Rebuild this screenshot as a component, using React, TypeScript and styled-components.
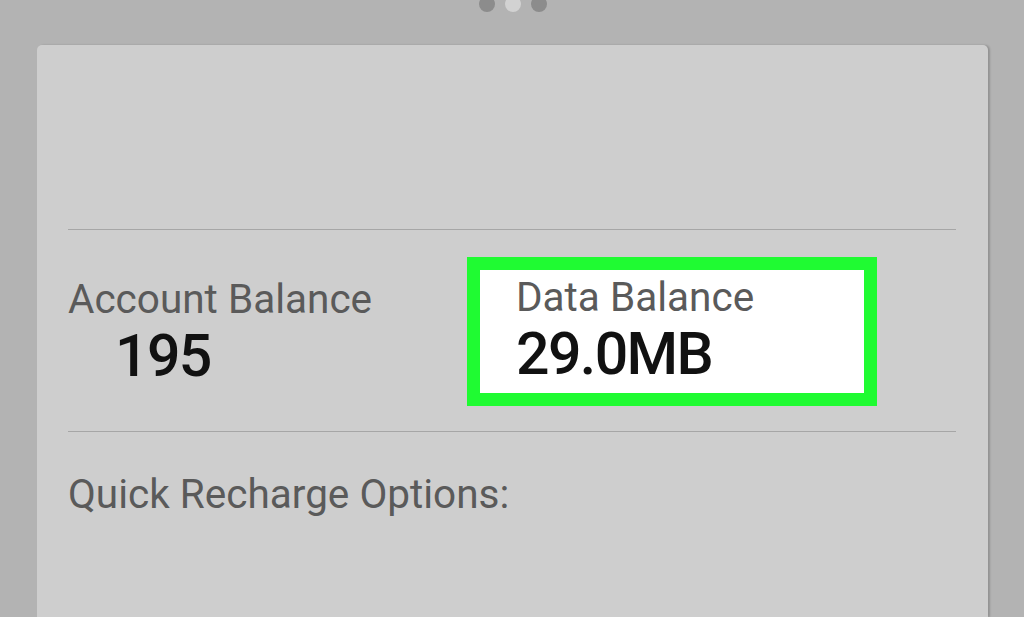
import React from "react";
import styled, { createGlobalStyle } from "styled-components";

const Global = createGlobalStyle`
  html, body {
    margin: 0;
    padding: 0;
    background: #b3b3b3;
    overflow: hidden;
    font-family: Roboto, "Noto Sans", sans-serif;
  }
  #root { height: 617px; }
`;

const Screen = styled.div`
  width: 1024px;
  height: 617px;
  display: flex;
  flex-direction: column;
  overflow: hidden;
`;

const Pager = styled.div`
  display: flex;
  justify-content: center;
  gap: 10px;
  margin-top: -4px;
  padding-left: 1px;
`;

const Dot = styled.span<{ $active?: boolean }>`
  width: 16px;
  height: 16px;
  border-radius: 50%;
  background: ${(p) => (p.$active ? "#d2d2d2" : "#8c8c8c")};
`;

const Card = styled.div`
  margin: 33px 0 0 37px;
  width: 951px;
  flex: 1;
  background: #cecece;
  border-radius: 5px 5px 0 0;
  box-shadow: 2px 0 2px rgba(0, 0, 0, 0.18);
  padding: 184px 32px 0 31px;
  box-sizing: border-box;
`;

const Divider = styled.div`
  height: 1px;
  background: #a6a6a6;
`;

const BalanceRow = styled.div`
  display: flex;
  align-items: flex-start;
  margin: 27px 0 25px;
`;

const AccountColumn = styled.div`
  width: 399px;
  padding-top: 23px;
`;

const Label = styled.div`
  font-size: 40.5px;
  line-height: 39px;
  color: #5a5a5a;
`;

const Value = styled.div<{ $indent?: number }>`
  font-size: 59px;
  line-height: 1;
  font-weight: 500;
  letter-spacing: -1.6px;
  color: #111;
  margin-top: 7px;
  padding-left: ${(p) => p.$indent ?? 0}px;
`;

const Highlight = styled.div`
  width: 410px;
  height: 149px;
  box-sizing: border-box;
  border: 13px solid #1ffb32;
  background: #ffffff;
  padding: 8px 0 0 36px;
`;

const Section = styled.div`
  margin-top: 43px;
`;

export default function App() {
  return (
    <Screen>
      <Global />
      <Pager>
        <Dot />
        <Dot $active />
        <Dot />
      </Pager>
      <Card>
        <Divider />
        <BalanceRow>
          <AccountColumn>
            <Label>Account Balance</Label>
            <Value $indent={47}>195</Value>
          </AccountColumn>
          <Highlight>
            <Label>Data Balance</Label>
            <Value>29.0MB</Value>
          </Highlight>
        </BalanceRow>
        <Divider />
        <Section>
          <Label>Quick Recharge Options:</Label>
        </Section>
      </Card>
    </Screen>
  );
}
